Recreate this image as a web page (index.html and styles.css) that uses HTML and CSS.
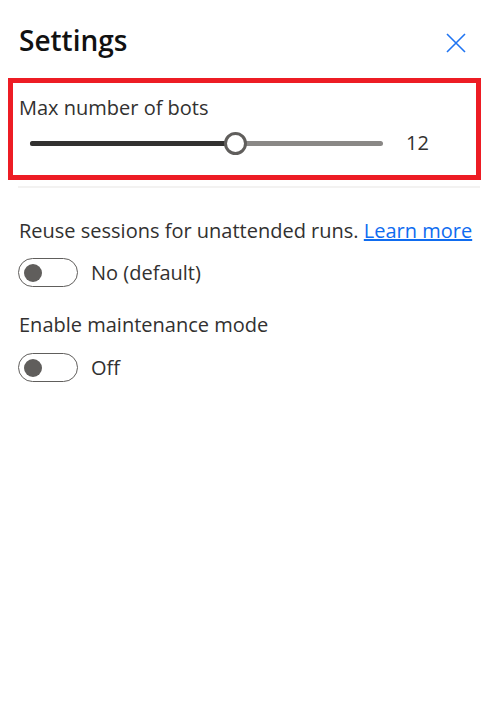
FILE: index.html
```html
<!DOCTYPE html>
<html lang="en">
<head>
<meta charset="utf-8">
<title>Settings</title>
<link rel="stylesheet" href="styles.css">
</head>
<body>
<div class="panel">
  <div class="header">
    <h1 class="title">Settings</h1>
    <button class="close" aria-label="Close">
      <svg width="20" height="20" viewBox="0 0 20 20"><path d="M1 1 L19 19 M19 1 L1 19" stroke="#1f74f2" stroke-width="1.6" fill="none"/></svg>
    </button>
  </div>
  <div class="highlight">
    <div class="label">Max number of bots</div>
    <div class="slider-row">
      <div class="track">
        <div class="fill" style="width:205px"></div>
        <div class="thumb" style="left:205px"></div>
      </div>
      <span class="value">12</span>
    </div>
  </div>
  <div class="divider"></div>
  <div class="field first">
    <div class="label">Reuse sessions for unattended runs. <a href="#" class="link">Learn more</a></div>
    <div class="toggle-row">
      <span class="toggle"><span class="knob"></span></span>
      <span class="toggle-text">No (default)</span>
    </div>
  </div>
  <div class="field second">
    <div class="label">Enable maintenance mode</div>
    <div class="toggle-row">
      <span class="toggle"><span class="knob"></span></span>
      <span class="toggle-text">Off</span>
    </div>
  </div>
</div>
</body>
</html>
```
FILE: styles.css
```css
html, body {
  margin: 0;
  padding: 0;
  background: #ffffff;
}
body {
  font-family: "Open Sans", "Noto Sans", sans-serif;
  color: #323130;
}
.panel {
  width: 498px;
  display: flex;
  flex-direction: column;
}
.header {
  display: flex;
  justify-content: space-between;
  align-items: center;
  padding: 26px 32px 0 19px;
  height: 28px;
}
.title {
  margin: 0;
  font-size: 28px;
  line-height: 28px;
  font-weight: 600;
  color: #111111;
}
.close {
  border: 0;
  background: none;
  padding: 0;
  width: 20px;
  height: 20px;
  display: flex;
  margin-top: 6px;
}
.highlight {
  margin: 24px 0 0 8px;
  width: 463px;
  height: 92px;
  border: 5px solid #ed1c24;
  padding: 0;
  display: flex;
  flex-direction: column;
}
.label {
  font-size: 20px;
  line-height: 20px;
  color: #323130;
}
.highlight .label {
  margin: 15px 0 0 6px;
}
.slider-row {
  display: flex;
  align-items: center;
  margin-top: 13px;
  height: 24px;
}
.track {
  position: relative;
  margin-left: 17px;
  width: 353px;
  height: 5px;
  border-radius: 3px;
  background: #8a8886;
}
.fill {
  position: absolute;
  left: 0;
  top: 0;
  bottom: 0;
  border-radius: 3px;
  background: #323130;
}
.thumb {
  position: absolute;
  top: 50%;
  width: 17px;
  height: 17px;
  margin: -11.5px 0 0 -11.5px;
  border: 3px solid #605e5c;
  border-radius: 50%;
  background: #fff;
}
.value {
  margin-left: 23px;
  font-size: 20px;
  line-height: 20px;
  color: #323130;
}
.divider {
  margin: 6px 18px 0 18px;
  height: 2px;
  background: #f3f2f1;
}
.field {
  padding-left: 19px;
}
.field.first {
  margin-top: 33px;
}
.field.second {
  margin-top: 28px;
}
.field.second .toggle-row {
  margin-top: 18px;
}
.link {
  color: #0f6cf0;
  text-decoration: underline;
}
.toggle-row {
  display: flex;
  align-items: center;
  margin-top: 17px;
}
.toggle {
  width: 58px;
  height: 27px;
  border: 1px solid #605e5c;
  border-radius: 15px;
  display: flex;
  align-items: center;
  margin-left: -1px;
}
.knob {
  width: 18px;
  height: 18px;
  border-radius: 50%;
  background: #605e5c;
  margin-left: 5px;
}
.toggle-text {
  margin-left: 13px;
  font-size: 20px;
  line-height: 20px;
  color: #323130;
}
```
